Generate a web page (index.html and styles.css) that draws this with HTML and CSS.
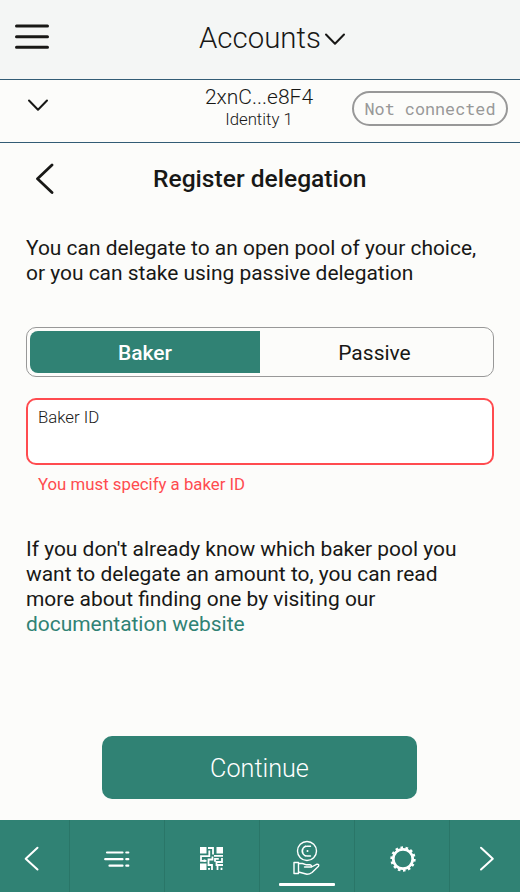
FILE: index.html
```html
<!DOCTYPE html>
<html lang="en">
<head>
<meta charset="utf-8">
<title>Register delegation</title>
<link rel="stylesheet" href="styles.css">
</head>
<body>
<div class="app">
  <header class="header">
    <button class="menu" aria-label="Menu"><svg width="34" height="26" viewBox="0 0 34 26"><path d="M1.5 2.1h31M1.5 12.8h31M1.5 23.2h31"/></svg></button>
    <h1 class="header-title">Accounts</h1>
    <svg class="header-chevron" width="22" height="14" viewBox="0 0 22 14"><path d="M2 2.500l9 9.3 9-9.300"/></svg>
  </header>
  <section class="account">
    <svg class="account-chevron" width="22" height="14" viewBox="0 0 22 14"><path d="M2 2.500l9 9.3 9-9.300"/></svg>
    <div class="account-name"><div class="address">2xnC...e8F4</div><div class="identity">Identity 1</div></div>
    <div class="status">Not connected</div>
  </section>
  <main class="main">
    <div class="page-head">
      <svg class="back" width="20" height="32" viewBox="0 0 20 32"><path d="M17 3L2.500 16.800 17 30.500"/></svg>
      <h2 class="page-title">Register delegation</h2>
    </div>
    <p class="text intro">You can delegate to an open pool of your choice,<br>or you can stake using passive delegation</p>
    <div class="toggle"><div class="option selected">Baker</div><div class="option">Passive</div></div>
    <label class="field"><span>Baker ID</span></label>
    <p class="error">You must specify a baker ID</p>
    <p class="text help">If you don't already know which baker pool you<br>want to delegate an amount to, you can read<br>more about finding one by visiting our<br><a class="link">documentation website</a></p>
    <button class="continue">Continue</button>
  </main>
  <nav class="nav">
    <div class="nav-item"><svg class="line" width="16" height="26" viewBox="0 0 16 26"><path d="M13.500 1.700L1.700 12.700l11.800 10.800"/></svg></div>
    <div class="nav-item"><svg class="line log" width="26" height="18" viewBox="0 0 26 18"><path d="M3 2.500h15.500M22.300 2.500h2M1.200 9.200h17.300M22.300 9.200h2M5.500 15.700h13M22.300 15.700h2"/></svg></div>
    <div class="nav-item"><svg class="qr" width="23" height="23" viewBox="0 0 23 23"><path class="solid" d="M0 0h6.500v6.500H0zM16.500 0H23v6.500h-6.500zM0 16.500h6.500V23H0z"/><path d="M8 1h5v6.500M9.300 3.500v5.700H1v4.600h5.500M4.500 12.500v2.500M12.500 9.500v3H8.500v5.500h3.500v5M14 8.800h9M15 14.800v-3h3.800M22 11v4h-5.500v3H23M8 21.800h2M17.500 19v4M21.500 20.800V23"/></svg></div>
    <div class="nav-item active"><svg class="coin-hand" width="27" height="36" viewBox="0 0 27 36"><circle cx="14" cy="11" r="9.500"/><path d="M17.500 6.200h-3.500a4.900 4.900 0 0 0 0 9.800h3.500M12.500 6a5.600 5.600 0 0 0 0 10"/><circle class="dot" cx="14.500" cy="11" r="1"/><path d="M1 22.500h4.500v11H1zM5.500 23.500h4l4 1.300h3.500q2 .5 1.500 2.200h-7M18.500 27l5.500-2.800q2.500 0 1.500 2L19 32.500q-2.500 1.800-5 1.800L5.500 32"/></svg></div>
    <div class="nav-item"><svg class="gear" width="28" height="28" viewBox="0 0 28 28"><circle cx="14" cy="14" r="9.700"/><circle class="teeth" cx="14" cy="14" r="11.300" pathLength="140"/></svg></div>
    <div class="nav-item"><svg class="line" width="16" height="26" viewBox="0 0 16 26"><path d="M2 1.700l11.800 11L2 23.500"/></svg></div>
  </nav>
</div>
</body>
</html>
```

FILE: styles.css
```css
* { box-sizing: border-box; }
body { margin: 0; font-family: Roboto, sans-serif; color: #181816; background: #fcfcfa; }
h1, h2, p { margin: 0; }
button { border: 0; padding: 0; background: none; font: inherit; }
svg { display: block; fill: none; stroke: #181816; stroke-width: 2; stroke-linecap: round; stroke-linejoin: round; flex: none; }
.app { width: 520px; height: 892px; display: flex; flex-direction: column; overflow: hidden; }

.header { height: 80px; flex: none; background: #f4f6f5; border-bottom: 1px solid #325c75; display: flex; align-items: flex-start; }
.menu { margin: 23.500px 0 0 15px; width: 34px; }
.menu svg { stroke-width: 3; }
.header-title { margin-left: 150px; padding-top: 20px; width: 125px; font-size: 29.4px; line-height: 36px; font-weight: 300; white-space: nowrap; }
.header-chevron { margin-top: 32px; }

.account { height: 63px; flex: none; border-bottom: 1px solid #325c75; display: flex; align-items: flex-start; padding-right: 12px; }
.account-chevron { margin: 18px 0 0 27px; }
.account-name { width: 160px; margin-left: 130px; text-align: center; font-weight: 300; }
.address { font-size: 21px; line-height: 24px; margin-top: 5px; }
.identity { font-size: 16.8px; line-height: 20px; }
.status { width: 156px; height: 35px; margin: 11px 0 0 auto; border: 2px solid #989898; border-radius: 18px; color: #989898; font: 16.8px/31px "Roboto Mono", "DejaVu Sans Mono", monospace; text-align: center; white-space: nowrap; }

.main { height: 677px; flex: none; padding: 0 26px; display: flex; flex-direction: column; }
.page-head { height: 93px; flex: none; display: flex; align-items: flex-start; padding: 19px 0 0 9px; }
.back { stroke-width: 2.8; }
.page-title { margin-left: 98px; font-size: 24.6px; line-height: 34px; font-weight: 500; white-space: nowrap; }
.text { font-size: 20.95px; line-height: 25px; white-space: nowrap; }
.toggle { height: 50px; flex: none; margin-top: 41px; padding: 2px; border: 1.500px solid #989898; border-radius: 10px; display: flex; }
.option { flex: 1; display: flex; align-items: center; justify-content: center; font-size: 21px; padding: 2px 2px 0 0; }
.selected { background: #308274; color: #fff; font-weight: 500; border-radius: 8px 0 0 8px; margin: 1px 0 1px 1px; flex: 0 0 230px; padding-right: 0; }
.field { height: 67px; flex: none; margin-top: 21px; padding: 8px 10px; border: 2px solid #ff4b4f; border-radius: 10px; background: #fff; font-size: 16.8px; line-height: 18px; font-weight: 300; }
.error { margin: 9px 0 0 12px; font-size: 16.8px; line-height: 20px; color: #ff4b4f; }
.help { margin-top: 43px; }
.link { color: #308274; }
.continue { width: 315px; height: 63px; flex: none; margin: 99px 0 0 76px; border-radius: 10px; background: #308274; color: #fff; font-size: 25.2px; font-weight: 300; padding-top: 1px; }

.nav { height: 72px; flex: none; background: #308274; display: grid; grid-template-columns: 70px 95px 95px 95px 95px 70px; }
.nav-item { display: flex; align-items: flex-start; justify-content: center; padding-top: 26px; border-right: 1px solid #2a7668; position: relative; }
.nav-item:first-child { padding-right: 6px; }
.nav-item:last-child { border-right: 0; padding-left: 4px; }
.nav svg { stroke: #fff; }
.nav .log { margin-top: 4px; stroke-width: 2.200; }
.nav .qr { margin: 1px 2px 0 0; stroke-width: 1.800; stroke-linecap: butt; stroke-linejoin: miter; }
.nav .solid { fill: #fff; stroke: none; }
.nav .coin-hand { margin: -6px 1px 0 0; stroke-width: 1.400; }
.nav .dot { fill: #fff; stroke: none; }
.nav .gear { margin: -1px 0 0 1px; stroke-width: 2.700; stroke-linecap: butt; }
.teeth { stroke-dasharray: 5 5; }
.active::after { content: ""; position: absolute; left: 19px; top: 63px; width: 56px; height: 3px; border-radius: 1px; background: #fff; }
```
